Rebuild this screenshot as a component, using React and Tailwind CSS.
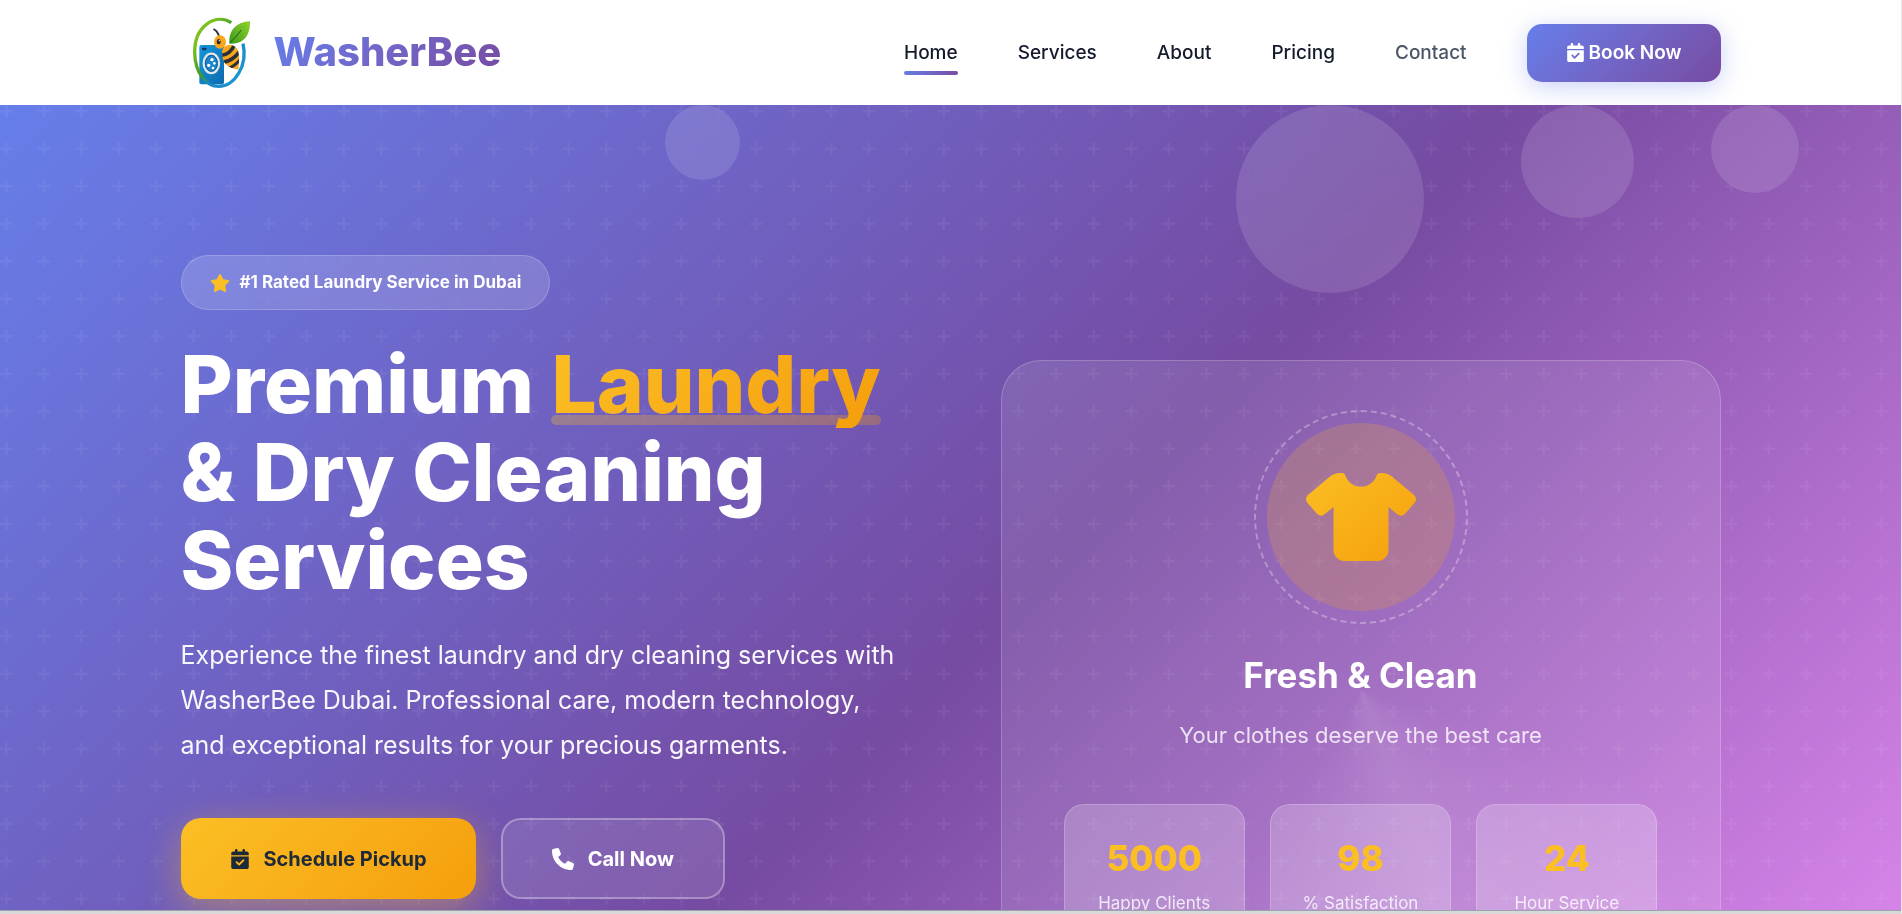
import { FaCalendarCheck, FaPhone, FaShirt, FaStar } from 'react-icons/fa6';

const navLinks = [
  { label: 'Home', active: true },
  { label: 'Services' },
  { label: 'About' },
  { label: 'Pricing' },
  { label: 'Contact', muted: true },
];

const stats = [
  { value: '5000', label: 'Happy Clients' },
  { value: '98', label: '% Satisfaction' },
  { value: '24', label: 'Hour Service' },
];

function BeeLogo() {
  return (
    <svg viewBox="0 0 225 255" className="ml-1 h-[85px] w-[75px]" aria-hidden="true">
      <defs>
        <linearGradient id="ring" x1="0" y1="0" x2="1" y2="1">
          <stop offset="0.2" stopColor="#7cc021" />
          <stop offset="0.48" stopColor="#3f9a2c" />
          <stop offset="0.62" stopColor="#1a86c4" />
          <stop offset="1" stopColor="#1c9ddb" />
        </linearGradient>
        <linearGradient id="leaf" x1="0" y1="1" x2="1" y2="0">
          <stop offset="0" stopColor="#3c9a1c" />
          <stop offset="1" stopColor="#8fd22c" />
        </linearGradient>
        <linearGradient id="washer" x1="0" y1="0" x2="1" y2="1">
          <stop offset="0" stopColor="#1496da" />
          <stop offset="1" stopColor="#0d6bb0" />
        </linearGradient>
        <clipPath id="beeBody">
          <path d="M112 120C116 106 138 100 150 110C164 121 164 144 160 179C141 176 119 167 115 150C111 140 110 130 112 120Z" />
        </clipPath>
      </defs>
      <rect x="43" y="105" width="74" height="118" rx="6" fill="url(#washer)" />
      <rect x="51" y="113" width="13" height="8" rx="2" fill="#123a5c" />
      <ellipse cx="79" cy="160" rx="23" ry="29" fill="#1d86c9" stroke="#e3e6e8" strokeWidth="7" />
      <ellipse cx="79" cy="160" rx="18" ry="24" fill="none" stroke="#0b5d9b" strokeWidth="3" />
      <circle cx="81" cy="149" r="5" fill="#fff" />
      <circle cx="71" cy="166" r="5" fill="#fff" />
      <circle cx="88" cy="160" r="4" fill="#fff" />
      <circle cx="84" cy="174" r="4" fill="#fff" />
      <path
        d="M139 38C90 8 28 50 29 128C30 190 65 229 101 229C150 229 189 165 174 101"
        fill="none"
        stroke="url(#ring)"
        strokeWidth="10"
      />
      <path d="M133 101C130 60 155 36 195 34C196 76 176 104 133 101Z" fill="url(#leaf)" />
      <path d="M136 97Q152 83 168 61" fill="none" stroke="#16561a" strokeWidth="3" strokeLinecap="round" />
      <path d="M102 78Q98 64 87 58" fill="none" stroke="#2b3440" strokeWidth="5" strokeLinecap="round" />
      <g clipPath="url(#beeBody)">
        <rect x="105" y="98" width="70" height="90" fill="#fba51a" />
        <path d="M108 136Q135 134 148 106" fill="none" stroke="#2a3239" strokeWidth="11" />
        <path d="M112 158Q145 152 164 124" fill="none" stroke="#2a3239" strokeWidth="11" />
        <path d="M128 176Q150 168 166 148" fill="none" stroke="#2a3239" strokeWidth="9" />
      </g>
      <ellipse cx="105" cy="96" rx="18" ry="20" fill="#fba51a" />
      <ellipse cx="101" cy="95" rx="6" ry="8" fill="#2a2a2a" />
      <circle cx="103" cy="92" r="2" fill="#fff" />
    </svg>
  );
}

function Header() {
  return (
    <header className="relative z-20 bg-white">
      <div className="mx-auto flex h-[105px] max-w-[1540px] items-center justify-between">
        <a href="#home" className="flex items-center gap-[14px]">
          <BeeLogo />
          <span className="bg-linear-135 from-[#667eea] to-[#764ba2] bg-clip-text pb-0.5 text-[40px] leading-none font-extrabold text-transparent">
            WasherBee
          </span>
        </a>
        <nav className="flex items-center gap-[60px]">
          {navLinks.map((link) => (
            <a
              key={link.label}
              href={`#${link.label.toLowerCase()}`}
              className={`relative py-2 text-[19px] leading-7 font-medium ${link.muted ? 'text-gray-600' : 'text-[#141b2d]'}`}
            >
              {link.label}
              {link.active && (
                <span className="absolute bottom-0 left-0 h-1 w-full rounded-sm bg-linear-135 from-[#667eea] to-[#764ba2]" />
              )}
            </a>
          ))}
          <button
            type="button"
            className="flex h-[58px] items-center gap-1 rounded-[15px] bg-linear-135 from-[#667eea] to-[#764ba2] px-[39px] text-[19px] font-semibold text-white shadow-[0_5px_25px_rgba(102,126,234,0.35)]"
          >
            <FaCalendarCheck />
            <span className="pt-0.5">Book Now</span>
          </button>
        </nav>
      </div>
    </header>
  );
}

function HeroBackground() {
  return (
    <>
      <svg className="absolute inset-0 h-full w-full" aria-hidden="true">
        <defs>
          <pattern id="plus" width="75" height="75" viewBox="0 0 60 60" patternUnits="userSpaceOnUse">
            <path
              d="M36 34v-4h-2v4h-4v2h4v4h2v-4h4v-2h-4zm0-30V0h-2v4h-4v2h4v4h2V6h4V4h-4zM6 34v-4H4v4H0v2h4v4h2v-4h4v-2H6zM6 4V0H4v4H0v2h4v4h2V6h4V4H6z"
              fill="#fff"
              fillOpacity="0.05"
            />
          </pattern>
        </defs>
        <rect width="100%" height="100%" fill="url(#plus)" />
      </svg>
      <div className="absolute top-0 left-[35%] h-[75px] w-[75px] rounded-full bg-white/12 backdrop-blur-md" />
      <div className="absolute top-0 left-[65%] h-[188px] w-[188px] rounded-full bg-white/12 backdrop-blur-md" />
      <div className="absolute top-0 left-[80%] h-[113px] w-[113px] rounded-full bg-white/12 backdrop-blur-md" />
      <div className="absolute top-0 left-[90%] h-[88px] w-[88px] rounded-full bg-white/12 backdrop-blur-md" />
    </>
  );
}

function HeroText() {
  return (
    <div>
      <div className="inline-flex h-[55px] items-center gap-[10px] rounded-full border border-white/20 bg-white/15 px-7 text-[17px] font-bold text-white backdrop-blur-md">
        <FaStar className="text-[20px] text-[#fbbf24]" />
        #1 Rated Laundry Service in Dubai
      </div>
      <h1 className="isolate mt-[30px] text-[80px] leading-[88px] font-extrabold text-white">
        Premium{' '}
        <span className="relative inline-block">
          <span className="absolute inset-x-0 bottom-[3px] -z-10 h-[10px] rounded-[5px] bg-linear-135 from-[#fbbf24] to-[#f59e0b] opacity-30" />
          <span className="block bg-linear-135 from-[#fbbf24] to-[#f59e0b] bg-clip-text text-transparent">Laundry</span>
        </span>{' '}
        & Dry Cleaning Services
      </h1>
      <p className="mt-[29px] text-[25px] leading-[45px] text-white/95">
        Experience the finest laundry and dry cleaning services with WasherBee Dubai. Professional care, modern
        technology, and exceptional results for your precious garments.
      </p>
      <div className="mt-[50px] flex gap-[25px]">
        <button
          type="button"
          className="flex h-[81px] items-center gap-[14px] rounded-[20px] bg-linear-135 from-[#fbbf24] to-[#f59e0b] px-[49px] text-[20px] font-bold text-gray-800 shadow-[0_10px_38px_rgba(251,191,36,0.4)]"
        >
          <FaCalendarCheck />
          Schedule Pickup
        </button>
        <button
          type="button"
          className="flex h-[81px] items-center gap-[14px] rounded-[20px] border-2 border-white/30 bg-white/10 px-[49px] text-[20px] font-bold text-white"
        >
          <FaPhone className="text-[22px]" />
          Call Now
        </button>
      </div>
    </div>
  );
}

function HeroCard() {
  return (
    <div className="relative mt-[105px] min-h-[660px] overflow-hidden rounded-[40px] border border-white/20 bg-white/10 p-[62px] text-center">
      <div className="absolute -inset-1/2 bg-[conic-gradient(from_106deg,transparent,rgba(255,255,255,0.1),transparent_30%)]" />
      <div className="relative">
        <div className="relative mx-auto flex h-[188px] w-[188px] items-center justify-center">
          <div className="absolute inset-0 rounded-full bg-linear-135 from-[#fbbf24] to-[#f59e0b] opacity-20" />
          <div className="absolute -inset-[13px] rounded-full border-2 border-dashed border-white/30" />
          <svg className="absolute h-0 w-0" aria-hidden="true">
            <defs>
              <linearGradient id="amber" x1="0" y1="0" x2="1" y2="1">
                <stop offset="0" stopColor="#fbbf24" />
                <stop offset="1" stopColor="#f59e0b" />
              </linearGradient>
            </defs>
          </svg>
          <FaShirt className="h-[88px] w-[110px]" fill="url(#amber)" />
        </div>
        <h2 className="mt-[43px] text-[35px] leading-[42px] font-bold text-white">Fresh &amp; Clean</h2>
        <p className="mt-[21px] text-[22px] leading-9 text-white/80">Your clothes deserve the best care</p>
        <div className="mt-[51px] grid grid-cols-3 gap-[25px]">
          {stats.map((stat) => (
            <div key={stat.label} className="rounded-[20px] border border-white/20 bg-white/20 px-2 py-[30px]">
              <div className="text-[35px] leading-[46px] font-extrabold text-[#fbbf24]">{stat.value}</div>
              <div className="mt-2 text-[17px] leading-7 text-white/80">{stat.label}</div>
            </div>
          ))}
        </div>
      </div>
    </div>
  );
}

function App() {
  return (
    <div className="flex h-screen flex-col overflow-hidden border-r border-gray-200 font-['Inter',sans-serif]">
      <Header />
      <main className="min-h-0 flex-1 overflow-hidden">
        <section
          id="home"
          className="relative min-h-[1128px] bg-[linear-gradient(135deg,#667eea_0%,#764ba2_50%,#f093fb_100%)] pt-[150px] pb-[108px]"
        >
          <HeroBackground />
          <div className="relative mx-auto grid max-w-[1540px] grid-cols-2 items-start gap-[100px]">
            <HeroText />
            <HeroCard />
          </div>
        </section>
      </main>
      <div className="h-1 shrink-0 border-t border-gray-400 bg-[#d9d9d9]" />
    </div>
  );
}

export default App;
